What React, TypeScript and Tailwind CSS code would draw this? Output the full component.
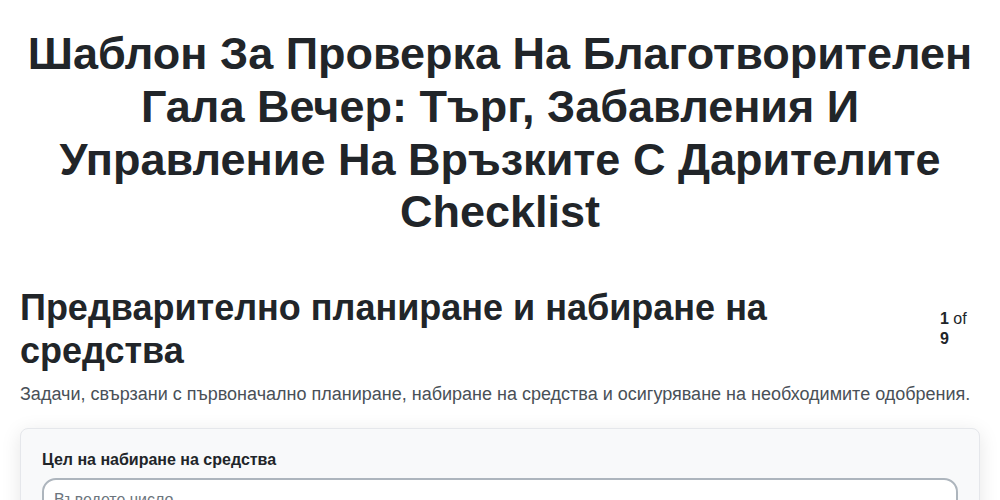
import React from "react";

export default function App() {
  return (
    <div className="min-h-screen bg-white text-[#212529]" style={{ fontFamily: '"Liberation Sans", Arial, sans-serif' }}>
      <div className="px-5 pt-[28px]">
        <h1 className="text-center text-[45px] font-bold leading-[52.8px] mb-[47px]">
          Шаблон За Проверка На Благотворителен Гала Вечер: Търг, Забавления И Управление На Връзките С Дарителите Checklist
        </h1>
        <div className="flex items-center justify-between gap-4">
          <h2 className="text-[36px] font-bold leading-[1.2] flex-1">
            Предварително планиране и набиране на средства
          </h2>
          <div className="w-[40px] shrink-0 text-[16px] leading-[20px]">
            <span className="font-bold">1</span> of <span className="font-bold">9</span>
          </div>
        </div>
        <p className="mt-[8px] text-[18px] text-[#495057] leading-[1.5]">
          Задачи, свързани с първоначално планиране, набиране на средства и осигуряване на необходимите одобрения.
        </p>
        <div className="mt-[20px] rounded-lg border border-[#e5e7eb] bg-[#f8f9fa] shadow-[0_4px_20px_rgba(0,0,0,0.1)] px-[21px] pt-[19px] pb-6">
          <label className="block text-[16px] font-bold leading-[24px] mb-[6px]">Цел на набиране на средства</label>
          <input
            type="text"
            placeholder="Въведете число"
            className="w-full rounded-[14px] border-2 border-[#adb5bd] bg-white px-[10px] py-[8px] text-[16px] placeholder:text-[#6c757d]"
          />
        </div>
      </div>
    </div>
  );
}
